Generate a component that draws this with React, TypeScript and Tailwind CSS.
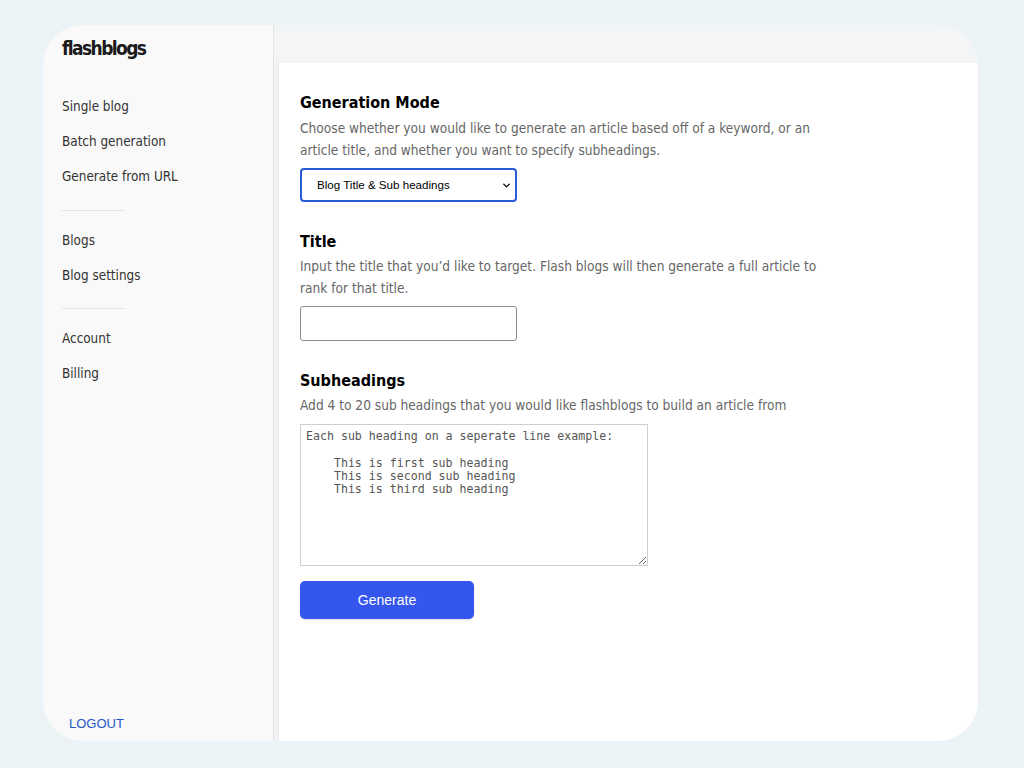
import { ChevronDown } from "lucide-react";

const topLinks = ["Single blog", "Batch generation", "Generate from URL"];
const blogLinks = ["Blogs", "Blog settings"];
const accountLinks = ["Account", "Billing"];

const placeholder = `Each sub heading on a seperate line example:

    This is first sub heading
    This is second sub heading
    This is third sub heading`;

const NavGroup = ({ items }: { items: string[] }) => (
  <ul className="flex flex-col">
    {items.map((item) => (
      <li key={item} className="h-[35px] flex items-center text-[13.4px] text-[#333]">
        {item}
      </li>
    ))}
  </ul>
);

const Section = ({
  title,
  className = "",
  children,
}: {
  title: string;
  className?: string;
  children: React.ReactNode;
}) => (
  <div className={`flex flex-col ${className}`}>
    <h2 className="text-[16px] font-bold text-black leading-[22px]">{title}</h2>
    {children}
  </div>
);

export default function App() {
  return (
    <div
      className="h-[768px] w-[1024px] bg-[#ebf3f6] pt-[25px] pl-[43px]"
      style={{ fontFamily: '"DejaVu Sans Condensed", "DejaVu Sans", sans-serif' }}
    >
      <div className="w-[935px] h-[716px] rounded-[40px] overflow-hidden flex">
        {/* Sidebar */}
        <aside className="w-[231px] bg-[#f9f9f9] border-r border-[#e3e3e3] flex flex-col pl-[19px] pt-[10px] pb-[8px]">
          <div className="text-[19px] font-bold text-[#1a1a1a] tracking-[-1.6px] h-[26px] leading-[26px]">
            flashblogs
          </div>
          <nav className="mt-[29px] flex flex-col">
            <NavGroup items={topLinks} />
            <div className="w-[63px] h-px bg-[#e4e4e4] mt-[15px] mb-[13px]" />
            <NavGroup items={blogLinks} />
            <div className="w-[63px] h-px bg-[#e4e4e4] mt-[14px] mb-[13px]" />
            <NavGroup items={accountLinks} />
          </nav>
          <div className="mt-auto pl-[7px] text-[13px] text-[#2456c9] font-[Liberation_Sans] uppercase">
            Logout
          </div>
        </aside>

        {/* Main */}
        <main className="flex-1 bg-[#f3f5f6] pt-[38px] pl-[5px] flex">
          <div className="flex-1 bg-white shadow-[-2px_0_6px_rgba(0,0,0,0.04)] pl-[21px] pt-[29px] flex flex-col gap-[28px]">
            <Section title="Generation Mode">
              <p className="mt-[3px] w-[540px] text-[13.6px] leading-[22px] text-[#666]">
                Choose whether you would like to generate an article based off of a keyword, or an article title, and whether you want to specify subheadings.
              </p>
              <div className="mt-[7px] relative w-[217px] h-[34px] border-2 border-[#2a5bd7] rounded-[4px] flex items-center pl-[15px] font-[Liberation_Sans] text-[11.6px] text-black">
                Blog Title &amp; Sub headings
                <ChevronDown className="absolute right-[3px] top-[10px] w-[11px] h-[11px]" strokeWidth={3} />
              </div>
            </Section>

            <Section title="Title" className="mt-[1px]">
              <p className="mt-[2px] w-[540px] text-[13.6px] leading-[22px] text-[#666]">
                Input the title that you’d like to target. Flash blogs will then generate a full article to rank for that title.
              </p>
              <div className="mt-[7px] w-[217px] h-[35px] border border-[#8c8c8c] rounded-[3px]" />
            </Section>

            <Section title="Subheadings" className="mt-[1px]">
              <p className="mt-[2px] text-[13.6px] leading-[22px] text-[#666]">
                Add 4 to 20 sub headings that you would like flashblogs to build an article from
              </p>
              <textarea
                className="mt-[8px] w-[348px] h-[142px] border border-[#cfcfcf] px-[5px] pt-[5px] text-[11.6px] leading-[13.3px] text-[#555] placeholder:text-[#555] resize-y outline-none block"
                style={{ fontFamily: '"DejaVu Sans Mono", monospace' }}
                placeholder={placeholder}
              />
              <button className="mt-[15px] w-[174px] h-[38px] rounded-[5px] bg-[#3456ec] text-white text-[14px] font-[Liberation_Sans] shadow-[0_1px_2px_rgba(0,0,0,0.15)]">
                Generate
              </button>
            </Section>
          </div>
        </main>
      </div>
    </div>
  );
}
